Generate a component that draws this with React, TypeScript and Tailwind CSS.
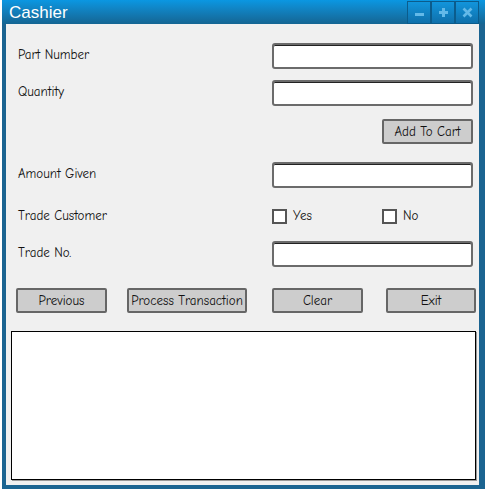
import React from "react";

const hand = { fontFamily: '"Comic Sans MS", "Comic Neue", Lato, "Liberation Sans", sans-serif' };

function Field() {
  return (
    <div className="h-[26px] w-[201px] rounded-[3px] border-2 border-[#6b6b6b] bg-white shadow-[inset_0_1px_0_#222]" />
  );
}

function SketchButton({ label, width }: { label: string; width: string }) {
  return (
    <button
      className={`${width} h-[25px] rounded-[2px] border-2 border-[#666] bg-[#cdcdcd] text-[13px] font-medium text-[#111] leading-none`}
      style={hand}
    >
      {label}
    </button>
  );
}

function Check({ label }: { label: string }) {
  return (
    <div className="flex items-center gap-[6px]">
      <span className="block h-[15px] w-[15px] border-2 border-[#555] bg-white" />
      <span className="text-[13px] text-[#111]">{label}</span>
    </div>
  );
}

function TitleButton({ children }: { children: React.ReactNode }) {
  return (
    <div className="flex h-[23px] w-[24px] items-center justify-center border border-[#0b5c8c] bg-gradient-to-b from-[#1295dc] to-[#0f70ab]">
      {children}
    </div>
  );
}

export default function App() {
  return (
    <div className="h-[491px] w-[487px] bg-white">
      <div className="ml-[2px] flex h-[489px] w-[483px] flex-col bg-[#1b6491]">
        {/* title bar */}
        <div className="flex h-[24px] items-center justify-between bg-gradient-to-b from-[#0a97e2] to-[#146593] pl-[7px] pr-[6px]">
          <span className="text-[17px] leading-none text-white" style={{ fontFamily: '"Liberation Sans", Arial, sans-serif' }}>
            Cashier
          </span>
          <div className="flex self-start pt-px">
            <TitleButton>
              <span className="mt-[3px] block h-[3px] w-[9px] bg-[#63b9e8]" />
            </TitleButton>
            <TitleButton>
              <svg width="11" height="11" viewBox="0 0 11 11">
                <path d="M5.5 1v9M1 5.5h9" stroke="#63b9e8" strokeWidth="3" />
              </svg>
            </TitleButton>
            <TitleButton>
              <svg width="11" height="11" viewBox="0 0 11 11">
                <path d="M1.5 1.5l8 8M9.5 1.5l-8 8" stroke="#63b9e8" strokeWidth="2.6" />
              </svg>
            </TitleButton>
          </div>
        </div>

        {/* body */}
        <div className="mb-[4px] ml-[4px] mr-[6px] flex flex-1 flex-col bg-[#f0f0f0] pt-[19px] text-[13px] font-medium text-[#111]" style={hand}>
          <div className="flex h-[26px] items-center justify-between pl-[12px] pr-[6px]">
            <span className="-mt-[3px]">Part Number</span>
            <Field />
          </div>
          <div className="mt-[11px] flex h-[26px] items-center justify-between pl-[12px] pr-[6px]">
            <span className="-mt-[3px]">Quantity</span>
            <Field />
          </div>
          <div className="mt-[13px] flex justify-end pr-[6px]">
            <SketchButton label="Add To Cart" width="w-[91px]" />
          </div>
          <div className="mt-[18px] flex h-[26px] items-center justify-between pl-[12px] pr-[6px]">
            <span className="-mt-[3px]">Amount Given</span>
            <Field />
          </div>
          <div className="mt-[15px] flex h-[26px] items-center pl-[12px] pr-[6px]">
            <span className="w-[254px]">Trade Customer</span>
            <div className="w-[110px]">
              <Check label="Yes" />
            </div>
            <Check label="No" />
          </div>
          <div className="mt-[12px] flex h-[26px] items-center justify-between pl-[12px] pr-[6px]">
            <span className="-mt-[3px]">Trade No.</span>
            <Field />
          </div>
          <div className="mt-[21px] flex items-center pl-[10px]">
            <SketchButton label="Previous" width="w-[91px]" />
            <div className="ml-[20px]">
              <SketchButton label="Process Transaction" width="w-[120px]" />
            </div>
            <div className="ml-[25px]">
              <SketchButton label="Clear" width="w-[91px]" />
            </div>
            <div className="ml-[23px]">
              <SketchButton label="Exit" width="w-[90px]" />
            </div>
          </div>
          <div className="ml-[5px] mt-[18px] h-[149px] w-[465px] border border-black bg-white shadow-[1px_1px_0_#999]" />
        </div>
      </div>
    </div>
  );
}
